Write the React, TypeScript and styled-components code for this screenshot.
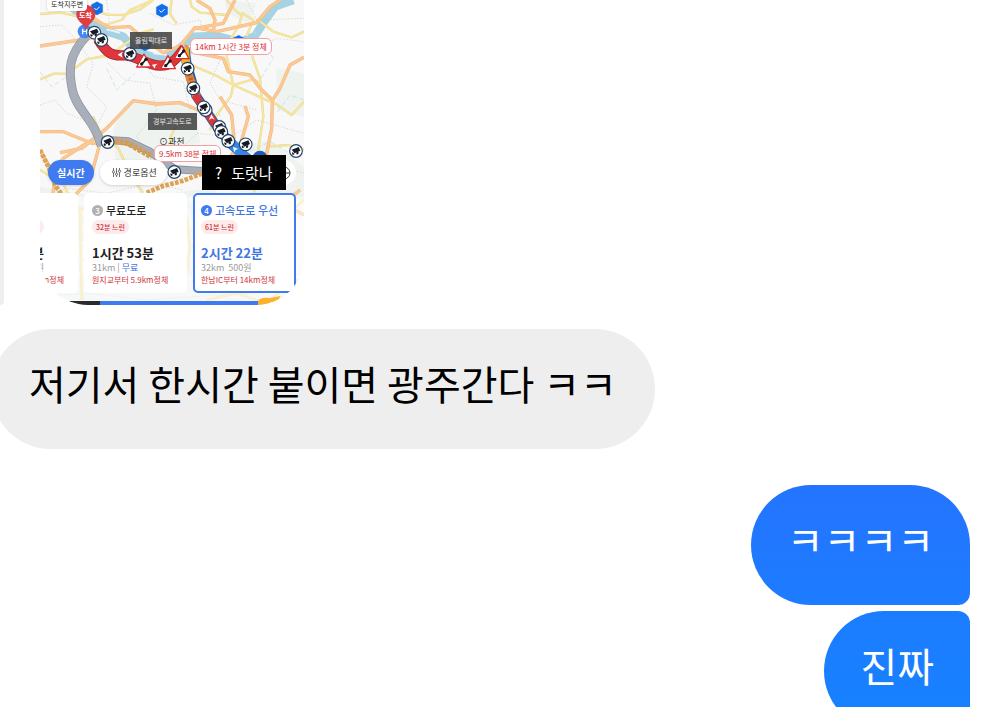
import React from "react";
import styled, { createGlobalStyle, css } from "styled-components";

const GlobalStyle = createGlobalStyle`
  * { box-sizing: border-box; }
  body { margin: 0; background: #fff; }
  body, button { font-family: "Noto Sans CJK KR", "Noto Sans", sans-serif; }
`;

const Thread = styled.main`
  display: flex;
  flex-direction: column;
  height: 100vh;
  overflow: hidden;
  background: #fff;
`;

const MediaRow = styled.section`
  display: flex;
  flex-shrink: 0;
  align-items: flex-start;
  gap: 36px;
`;

const QuoteBar = styled.div`
  align-self: stretch;
  width: 4px;
  background: #eee;
  border-radius: 0 0 4px 0;
`;

const MapCard = styled.article`
  position: relative;
  display: flex;
  flex-direction: column;
  justify-content: flex-end;
  width: 264px;
  height: 305px;
  overflow: hidden;
  border-radius: 0 0 48px 48px;
  background: #f8f8f8;
`;

const MapCanvas = styled.svg`
  position: absolute;
  inset: 0;
  width: 100%;
  height: 100%;
`;

const Pin = styled.span<{ $x: number; $y: number }>`
  position: absolute;
  left: ${(p) => p.$x}px;
  top: ${(p) => p.$y}px;
  white-space: nowrap;
`;

const RoadTag = styled(Pin)`
  padding: 0 5px;
  font-size: 7px;
  line-height: 17px;
  color: #e4e4e4;
  background: rgba(65, 65, 65, 0.87);
`;

const JamTag = styled(Pin)`
  padding: 0 4px;
  font-size: 8px;
  line-height: 15px;
  color: #e02832;
  background: #fff;
  border: 1px solid #f2a0a2;
  border-radius: 6px;
`;

const PlaceTag = styled(Pin)`
  padding: 0 4px;
  font-size: 7px;
  line-height: 14px;
  color: #222;
  background: #fff;
  border-radius: 4px;
  box-shadow: 0 0 2px rgba(0, 0, 0, 0.25);
`;

const TownTag = styled(Pin)`
  font-size: 9px;
  line-height: 12px;
  color: #333;
`;

const GoalTag = styled(Pin)`
  font-size: 7px;
  font-weight: 700;
  line-height: 10px;
  color: #fff;
`;

const Caption = styled(Pin)`
  display: flex;
  gap: 9px;
  padding: 0 13px;
  font-size: 15px;
  line-height: 35px;
  color: #fff;
  background: #000;
`;

const ChipRow = styled.div`
  position: relative;
  display: flex;
  gap: 6px;
  padding: 0 8px;
  margin-bottom: 8px;
`;

const Chip = styled.button<{ $active?: boolean }>`
  display: flex;
  align-items: center;
  gap: 3px;
  height: 25px;
  padding: 0 9px;
  border: 0;
  border-radius: 13px;
  font-size: 10px;
  color: #333;
  background: #fff;
  box-shadow: 0 1px 3px rgba(0, 0, 0, 0.16);
  ${(p) =>
    p.$active
      ? css`
          font-weight: 700;
          color: #fff;
          background: #3f7af0;
        `
      : css`
          padding: 0 10px 0 12px;
          font-size: 9px;
        `}
`;

const RoundButton = styled.button`
  display: grid;
  place-items: center;
  width: 25px;
  height: 25px;
  margin-left: auto;
  padding: 0;
  border: 0;
  border-radius: 50%;
  background: #fff;
`;

const RouteRow = styled.div`
  position: relative;
  display: flex;
  justify-content: flex-end;
  gap: 6px;
  padding-right: 8px;
  margin-bottom: 8px;
`;

const RouteCard = styled.button<{ $selected?: boolean }>`
  display: flex;
  flex-direction: column;
  flex: 0 0 103px;
  align-items: flex-start;
  height: 100px;
  padding: 7px 6px 5px;
  border: 2px solid ${(p) => (p.$selected ? "#3f7af0" : "#fff")};
  border-radius: 5px;
  background: #fff;
  color: ${(p) => (p.$selected ? "#3f76e4" : "#222")};
  text-align: left;
  white-space: nowrap;
`;

const RouteName = styled.span`
  display: flex;
  align-items: center;
  gap: 3px;
  height: 16px;
  font-size: 11px;
  font-weight: 500;
`;

const RouteNumber = styled.span<{ $selected?: boolean }>`
  display: grid;
  place-items: center;
  width: 11px;
  height: 11px;
  border-radius: 50%;
  font-size: 8px;
  line-height: 11px;
  color: #fff;
  background: ${(p) => (p.$selected ? "#3f7af0" : "#b0b0b0")};
`;

const SlowBadge = styled.span`
  height: 14px;
  margin-top: 2px;
  padding: 0 4px;
  border-radius: 7px;
  font-size: 7px;
  font-weight: 500;
  line-height: 14px;
  color: #d0333c;
  background: #fdeaea;
`;

const Duration = styled.span`
  margin-top: 10px;
  font-size: 13px;
  font-weight: 700;
  line-height: 18px;
`;

const Distance = styled.span`
  font-size: 9px;
  line-height: 12px;
  color: #999;
`;

const Free = styled.span`
  color: #3f76e4;
`;

const JamNote = styled.span`
  font-size: 8px;
  line-height: 12px;
  color: #d0333c;
`;

const PartialCard = styled(RouteCard)`
  align-items: flex-end;
  padding-right: 32px;

  ${JamNote} {
    margin-right: -20px;
  }
`;

const Progress = styled.div`
  position: relative;
  display: flex;
  height: 4px;
`;

const Segment = styled.span<{ $grow: number; $color: string }>`
  flex: ${(p) => p.$grow} 1 0;
  background: ${(p) => p.$color};
`;

const Bubble = styled.p<{ $mine?: boolean; $first?: boolean }>`
  flex-shrink: 0;
  margin: 0;
  padding: 30px 36px 42px;
  font-size: 40px;
  line-height: 48px;
  white-space: nowrap;
  ${(p) =>
    p.$mine
      ? css`
          align-self: flex-end;
          margin-right: 24px;
          color: #fff;
          border-radius: ${p.$first ? "60px 60px 12px 60px" : "60px 12px 12px 60px"};
          background: ${p.$first
            ? "linear-gradient(#2474ff, #1d7cff)"
            : "linear-gradient(#1c7cff, #1682ff)"};
        `
      : css`
          align-self: flex-start;
          margin: 24px 0 36px -9px;
          padding-left: 38px;
          padding-right: 38px;
          color: #000;
          border-radius: 60px;
          background: #eee;
        `}
`;

const MyMessages = styled.section`
  display: flex;
  flex-direction: column;
  gap: 6px;
`;

type Point = [number, number];

const cameras: Point[] = [
  [163, 98], [184, 120], [270, 162], [443, 206], [460, 265], [497, 330], [491, 322],
  [538, 381], [544, 396], [565, 423], [617, 433], [203, 426], [768, 453], [403, 516],
];
const works: Point[] = [[312, 183], [384, 188], [425, 158]];
const shields: Point[] = [[171, 25], [366, 32], [315, 133], [596, 126]];

const Camera = ({ at }: { at: Point }) => (
  <g transform={`translate(${at[0]} ${at[1]})`}>
    <circle r="19" fill="#fff" stroke="#264268" strokeWidth="3.5" />
    <path d="M-13-4 8-12 13-1-4 7Z" fill="#151a23" />
    <path d="M-11 3-4 9-9 12-12 9ZM1 4 8 2 7 10 1 10Z" fill="#151a23" />
  </g>
);

const Works = ({ at }: { at: Point }) => (
  <g transform={`translate(${at[0]} ${at[1]})`}>
    <path d="M0-21 22 18H-22Z" fill="#fff" stroke="#d92d30" strokeWidth="4" strokeLinejoin="round" />
    <path d="m-8 11 15-17" stroke="#17191f" strokeWidth="5" />
    <circle cx="6" cy="-5" r="5" fill="#17191f" />
    <circle cx="-7" cy="9" r="5" fill="#17191f" />
  </g>
);

const Shield = ({ at }: { at: Point }) => (
  <g transform={`translate(${at[0]} ${at[1]})`}>
    <path d="m0-20 17 9V11L0 20-17 11V-11Z" fill="#116de9" strokeLinejoin="round" stroke="#116de9" />
    <path d="m-8-1 6 6 10-10" fill="none" stroke="#fff" strokeWidth="3" />
  </g>
);

const minorRoads = [
  "M90 0 125 18 200 44 250 45 300 28 340 0",
  "M0 42 60 38 110 48 150 40 190 75",
  "M195 75 245 60 270 30 335 2",
  "M0 238 42 221 82 222 140 178 210 165 300 100 340 88",
  "M395 0 390 42 410 70M450 0 455 20 480 38 560 45",
  "M560 0 590 35 605 45 598 75 570 120 560 170 580 255 572 290 530 345 510 390",
  "M605 38 640 60 620 108",
  "M448 192 535 230 580 255 690 305",
  "M635 165 660 235 670 350 650 480 640 610",
  "M580 255 640 238 662 250",
  "M655 60 700 95 755 112 792 95",
  "M690 300 720 320 755 345 792 305",
  "M160 350 180 400 235 445 265 510 320 600",
  "M400 480 392 410 410 375 460 365",
  "M680 440 745 435 792 450",
  "M0 510 70 550 100 620 220 650",
  "M440 650 450 740 440 820M120 620 125 900",
  "M792 600 735 650 760 730 720 830 700 915",
  "M500 900 590 880 680 910 750 850 792 835",
];

const majorRoads = [
  "M0 138 120 120 155 112 200 140",
  "M105 0 160 58 210 83 270 80 325 128 370 158 420 138 465 83 530 95 650 68 690 20 720 0",
  "M470 0 510 25 525 60 520 95M585 0 550 70 465 85",
  "M450 155 550 175 565 215 630 225 660 265 697 300 695 385 680 460 688 570",
  "M792 172 750 195 720 265 697 302",
  "M0 395 70 395 155 430 230 425",
  "M60 458 125 445 200 385 280 302 350 312 420 308 490 336",
  "M155 420 70 475 35 520M180 430 150 540 50 640",
  "M0 450 45 530 30 650",
  "M540 290 575 345 585 450 550 500M615 318 625 350 605 420 570 500",
  "M780 570 730 610 792 645",
];

const paths = [
  "M0 80 65 75 100 110 160 190 140 260 200 320 165 390",
  "M200 0 210 90 290 145 340 230 430 245 450 330",
  "M330 40 400 75 480 60 500 145 620 155 710 115 792 125",
  "M0 315 45 300 80 340 145 365",
  "M205 190 255 240 330 250 350 330 290 410 350 500",
  "M420 450 470 400 575 410 650 360 792 400",
  "M620 0 650 60 792 55",
  "M540 180 510 250 540 300 650 330",
  "M0 590 80 565 200 580 330 550 430 570",
  "M110 610 145 710 115 770 130 900",
  "M600 500 650 530 700 490 792 520",
  "M440 590 470 660 430 730 460 850",
  "M0 890 150 880 320 900 540 885 792 870",
];

const MapDrawing = () => (
  <MapCanvas viewBox="0 0 792 915" aria-hidden="true">
    <g fill="#edf2ee" opacity=".8">
      <path d="M250 320Q350 275 470 330L480 430 360 455 300 550 230 520 220 390Z" />
      <path d="M555 0 650 10 625 70 560 40ZM710 205 792 220 792 350 710 330Z" />
      <path d="M0 560 170 590 150 730 0 700ZM400 580 530 560 530 750 420 860Z" />
      <path d="M590 440 690 420 792 500 792 600 560 570ZM0 825 792 850 792 915 0 915Z" />
    </g>
    <g fill="none" stroke="#a5d3e3" strokeLinejoin="round">
      <path d="M85 10 140 65 195 92 250 110 290 157 350 174 402 159 460 110 530 108 600 126 645 108 672 65 705 20 760 0" strokeWidth="25" />
      <path d="M200 88 240 98M340 160 380 164" stroke="#e8f6fa" strokeWidth="6" />
      <g stroke="#c3e0e9" strokeWidth="2.5" strokeDasharray="15 8">
        <path d="M200 205 230 270 285 220M230 480 280 510 315 585M0 215 35 260 80 230" />
        <path d="M640 90 700 175 650 255M792 300 750 285 710 340M535 335 560 410 600 430" />
        <path d="M630 455 690 425 750 460M440 610 480 680 450 760M110 690 145 750 110 820" />
      </g>
    </g>
    <g fill="none" stroke="#c4c2ba" strokeWidth="2" strokeDasharray="4 5">
      {paths.map((d) => <path key={d} d={d} />)}
    </g>
    <g fill="none" strokeLinejoin="round">
      {minorRoads.map((d) => <path key={d} d={d} stroke="#e2d49a" strokeWidth="7" />)}
      {minorRoads.map((d) => <path key={d} d={d} stroke="#f8e79a" strokeWidth="5" />)}
      {majorRoads.map((d) => <path key={d} d={d} stroke="#ecb980" strokeWidth="10" />)}
      {majorRoads.map((d) => <path key={d} d={d} stroke="#fdc891" strokeWidth="7" />)}
    </g>
    <path d="M0 590H792V915H0Z" fill="#fff" opacity=".5" />
    <g fill="none" strokeLinejoin="round">
      <path d="M203 420 265 424 330 455 405 508 500 514 610 480" stroke="#8d929c" strokeWidth="24" />
      <path d="M203 420 265 424 330 455 405 508 500 514 610 480" stroke="#a9adb6" strokeWidth="19" />
      <path d="M225 423 265 430 335 470" stroke="#d89a4c" strokeWidth="18" strokeDasharray="11 4" />
      <path d="M320 578 370 558 430 542 500 515M0 450 25 500 48 560 70 590" stroke="#dda252" strokeWidth="14" strokeDasharray="11 4" />
      <path d="M140 108C85 165 85 210 97 270S165 360 184 438" stroke="#8d929c" strokeWidth="27" />
      <path d="M140 108C85 165 85 210 97 270S165 360 184 438" stroke="#a9afba" strokeWidth="23" />
      <path d="M174 118C200 160 215 168 250 166S320 196 360 197 415 165 434 145" stroke="#a32830" strokeWidth="31" />
      <path d="M174 118C200 160 215 168 250 166S320 196 360 197 415 165 434 145" stroke="#df363c" strokeWidth="26" />
      <path d="M434 144 440 190 468 287 520 365 570 430 640 490" stroke="#1c5faa" strokeWidth="29" />
      <path d="M434 144 440 205" stroke="#f3b320" strokeWidth="24" />
      <path d="M440 205 470 292" stroke="#ee8430" strokeWidth="24" />
      <path d="M447 222 477 300" stroke="#ad692f" strokeWidth="12" strokeDasharray="7 5" />
      <path d="M465 285 520 365 555 410" stroke="#d9363b" strokeWidth="24" />
      <path d="M555 410 650 505" stroke="#3486e7" strokeWidth="30" />
    </g>
    <g fill="#fff">
      <path d="m233 164 15-9-3 9 3 9ZM336 194l17-3-7 6-1 9ZM514 343l10 16-9-4-8 5ZM579 440l16 7-9 3-3 8Z" />
    </g>
    <circle cx="660" cy="475" r="23" fill="#185eb8" />
    <circle cx="134" cy="94" r="21" fill="#4387f6" />
    <path d="M128 86v17M140 86v17M128 94h12" stroke="#fff" strokeWidth="4" />
    {shields.map((at) => <Shield key={at.join()} at={at} />)}
    {works.map((at) => <Works key={at.join()} at={at} />)}
    {cameras.map((at) => <Camera key={at.join()} at={at} />)}
    <path d="M138 88C132 70 110 64 110 43A27 27 0 0 1 165 43C165 64 144 70 138 88Z" fill="#e23c43" stroke="#c9353b" strokeWidth="2" />
    <path d="m432 134 15 2-6 15Z" fill="#ff8a35" />
    <path d="M654 915 654 902Q664 890 690 894L722 888 715 900 675 915Z" fill="#ffb02f" />
  </MapCanvas>
);

const SlidersIcon = () => (
  <svg width="9" height="11" viewBox="0 0 18 22" fill="none" stroke="#444" strokeWidth="1.5" aria-hidden="true">
    <path d="M3 2v5M3 12v8M9 2v10M9 17v3M15 2v4M15 11v9" />
    <circle cx="3" cy="9.5" r="2.3" />
    <circle cx="9" cy="14.5" r="2.3" />
    <circle cx="15" cy="8.5" r="2.3" />
  </svg>
);

const LocateIcon = () => (
  <svg width="14" height="14" viewBox="0 0 14 14" fill="none" stroke="#333" aria-hidden="true">
    <circle cx="7" cy="7" r="6" />
    <path d="M7 1v4M7 9v4M1 7h4M9 7h4" />
  </svg>
);

export default function App() {
  return (
    <>
      <GlobalStyle />
      <Thread>
        <MediaRow>
          <QuoteBar />
          <MapCard>
            <MapDrawing />
            <PlaceTag $x={7} $y={-3}>도착지주변</PlaceTag>
            <GoalTag $x={39} $y={10}>도착</GoalTag>
            <RoadTag $x={90} $y={32}>올림픽대로</RoadTag>
            <RoadTag $x={108} $y={113}>경부고속도로</RoadTag>
            <TownTag $x={119} $y={136}>⊙과천</TownTag>
            <JamTag $x={150} $y={38}>14km 1시간 3분 정체</JamTag>
            <JamTag $x={114} $y={145}>9.5km 38분 정체</JamTag>
            <ChipRow>
              <Chip $active>실시간</Chip>
              <Chip><SlidersIcon />경로옵션</Chip>
              <RoundButton aria-label="현재 위치"><LocateIcon /></RoundButton>
            </ChipRow>
            <RouteRow>
              <PartialCard>
                <RouteName>&nbsp;</RouteName>
                <SlowBadge>느린</SlowBadge>
                <Duration>분</Duration>
                <Distance>원</Distance>
                <JamNote>m정체</JamNote>
              </PartialCard>
              <RouteCard>
                <RouteName><RouteNumber>3</RouteNumber>무료도로</RouteName>
                <SlowBadge>32분 느린</SlowBadge>
                <Duration>1시간 53분</Duration>
                <Distance>31km | <Free>무료</Free></Distance>
                <JamNote>원지교부터 5.9km정체</JamNote>
              </RouteCard>
              <RouteCard $selected>
                <RouteName><RouteNumber $selected>4</RouteNumber>고속도로 우선</RouteName>
                <SlowBadge>61분 느린</SlowBadge>
                <Duration>2시간 22분</Duration>
                <Distance>32km&nbsp; 500원</Distance>
                <JamNote>한남IC부터 14km정체</JamNote>
              </RouteCard>
            </RouteRow>
            <Progress>
              <Segment $grow={60} $color="#2b2b2d" />
              <Segment $grow={158} $color="#3f7af0" />
              <Segment $grow={46} $color="transparent" />
            </Progress>
            <Caption $x={162} $y={155}><span>?</span><span>도랏나</span></Caption>
          </MapCard>
        </MediaRow>
        <Bubble>저기서 한시간 붙이면 광주간다 ㅋㅋ</Bubble>
        <MyMessages>
          <Bubble $mine $first>ㅋㅋㅋㅋ</Bubble>
          <Bubble $mine>진짜</Bubble>
        </MyMessages>
      </Thread>
    </>
  );
}
